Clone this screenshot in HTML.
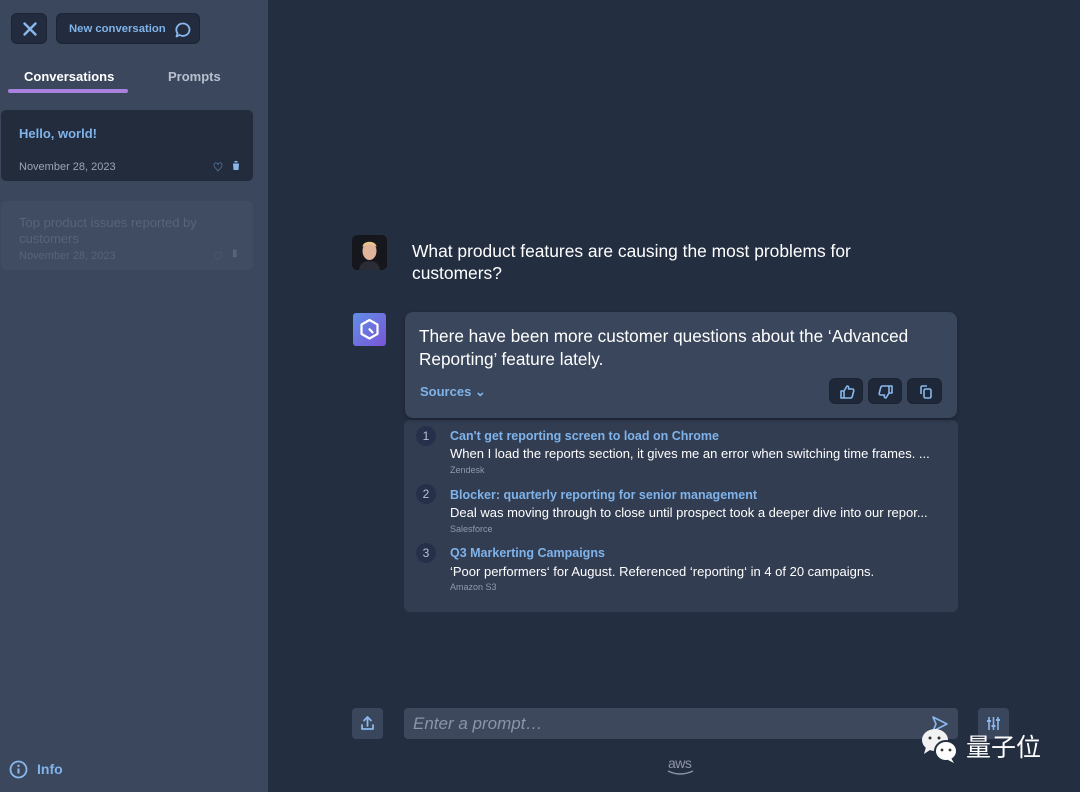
<!DOCTYPE html>
<html><head><meta charset="utf-8"><style>
*{box-sizing:border-box;margin:0;padding:0}
body{width:1080px;height:792px;overflow:hidden;background:#242e41;font-family:"Liberation Sans","Noto Sans CJK SC",sans-serif;position:relative}
.side{position:absolute;left:0;top:0;width:268px;height:792px;background:#3a475c}
.abs{position:absolute}
.btn{background:#232c3e;border-radius:6px;border:1px solid #1c2433}
.blue{color:#7fb3ea}
</style></head><body>
<div class="side">
  <div class="abs btn" style="left:11px;top:13px;width:36px;height:31px">
    <svg width="36" height="31" viewBox="0 0 36 31"><path d="M12.5 9.5l11 11M23.5 9.5l-11 11" stroke="#8ab8ec" stroke-width="2.4" stroke-linecap="round"/></svg>
  </div>
  <div class="abs btn" style="left:56px;top:13px;width:144px;height:31px">
    <span class="abs blue" style="left:12px;top:9px;font-size:11.3px;font-weight:bold">New conversation</span>
    <svg class="abs" style="left:116px;top:6px" width="20" height="20" viewBox="0 0 20 20"><path d="M10 3.5a6.5 6.2 0 1 1-3.4 11.5L3.5 16.5l1-3.3A6.5 6.2 0 0 1 10 3.5z" fill="none" stroke="#8ab8ec" stroke-width="1.8" stroke-linejoin="round"/></svg>
  </div>
  <div class="abs" style="left:24px;top:69px;color:#fff;font-size:13px;font-weight:bold">Conversations</div>
  <div class="abs" style="left:168px;top:69px;color:#b7c0cf;font-size:13px;font-weight:bold">Prompts</div>
  <div class="abs" style="left:8px;top:89px;width:120px;height:4px;border-radius:2px;background:#a982e0"></div>
  <div class="abs" style="left:1px;top:110px;width:252px;height:71px;background:#232c3d;border-radius:5px">
    <div class="abs blue" style="left:18px;top:16px;font-size:13px;font-weight:bold">Hello, world!</div>
    <div class="abs" style="left:18px;top:51px;font-size:11px;color:#9aa5b6">November 28, 2023</div>
    <div class="abs blue" style="left:212px;top:49px;font-size:10px">♡</div>
    <svg class="abs" style="left:231px;top:51px" width="8" height="9" viewBox="0 0 8 9"><path d="M0 1.5h8M2.5 1.5V0h3v1.5M1 2.5h6l-.5 6.5h-5z" fill="#8ab8ec"/></svg>
  </div>
  <div class="abs" style="left:1px;top:201px;width:252px;height:69px;background:#3f4c62;border-radius:5px">
    <div class="abs" style="left:18px;top:14px;font-size:13px;line-height:16px;color:#56657c">Top product issues reported by<br>customers</div>
    <div class="abs" style="left:18px;top:49px;font-size:11px;color:#56657c">November 28, 2023</div>
    <div class="abs" style="left:212px;top:47px;font-size:10px;color:#56657c">♡</div>
    <div class="abs" style="left:231px;top:47px;font-size:10px;color:#56657c">▮</div>
  </div>
  <svg class="abs" style="left:9px;top:760px" width="19" height="19" viewBox="0 0 19 19"><circle cx="9.5" cy="9.5" r="8" fill="none" stroke="#8ab8ec" stroke-width="1.8"/><path d="M9.5 8.5v5" stroke="#8ab8ec" stroke-width="2"/><circle cx="9.5" cy="5.8" r="1.2" fill="#8ab8ec"/></svg>
  <div class="abs blue" style="left:37px;top:761px;font-size:14px;font-weight:bold">Info</div>
</div>

<svg class="abs" style="left:352px;top:235px" width="35" height="35" viewBox="0 0 35 35"><rect width="35" height="35" rx="5" fill="#15171c"/><ellipse cx="17.5" cy="16" rx="7" ry="9" fill="#e0b49a"/><path d="M10.5 12c0-7 14-7 14 0-2-3-12-3-14 0z" fill="#e8c58c"/><path d="M7 35c1-7 6-9 10.5-9s9.5 2 10.5 9z" fill="#2a2d36"/></svg>
<div class="abs" style="left:412px;top:240px;color:#fff;font-size:17.4px;line-height:22px">What product features are causing the most problems for<br>customers?</div>

<svg class="abs" style="left:353px;top:313px" width="33" height="33" viewBox="0 0 33 33"><defs><linearGradient id="g" x1="0" y1="0" x2="1" y2="1"><stop offset="0" stop-color="#5f8fe6"/><stop offset="1" stop-color="#7a55d8"/></linearGradient></defs><rect width="33" height="33" rx="3" fill="url(#g)"/><path d="M16.5 7l8 4.6v9.3l-8 4.6-8-4.6v-9.3z" fill="none" stroke="#fff" stroke-width="2.2" stroke-linejoin="round"/><path d="M16.5 16.3l3 3" stroke="#fff" stroke-width="2.2" stroke-linecap="round"/></svg>

<div class="abs" style="left:404px;top:420px;width:554px;height:192px;background:#323d51;border-radius:6px"></div>
<div class="abs" style="left:405px;top:312px;width:552px;height:106px;background:#3a465b;border-radius:8px;box-shadow:0 2px 4px rgba(0,0,0,.25)">
  <div class="abs" style="left:14px;top:13px;color:#fff;font-size:17.2px;line-height:23px">There have been more customer questions about the ‘Advanced<br>Reporting’ feature lately.</div>
  <div class="abs blue" style="left:15px;top:72px;font-size:13px;font-weight:bold">Sources ⌄</div>
  <div class="abs btn" style="left:424px;top:66px;width:34px;height:26px;background:#1f2838"><svg width="34" height="26" viewBox="0 0 34 26"><path d="M11 12h3v7h-3zM14 12l3-5c1.5 0 2 1 1.5 3h4c1 0 1.5 1 1.2 2l-1.4 5.5c-.3 1-1 1.5-2 1.5H14" fill="none" stroke="#8ab8ec" stroke-width="1.6" stroke-linejoin="round"/></svg></div>
  <div class="abs btn" style="left:463px;top:66px;width:34px;height:26px;background:#1f2838"><svg width="34" height="26" viewBox="0 0 34 26"><g transform="rotate(180 17 13)"><path d="M11 12h3v7h-3zM14 12l3-5c1.5 0 2 1 1.5 3h4c1 0 1.5 1 1.2 2l-1.4 5.5c-.3 1-1 1.5-2 1.5H14" fill="none" stroke="#8ab8ec" stroke-width="1.6" stroke-linejoin="round"/></g></svg></div>
  <div class="abs btn" style="left:502px;top:66px;width:35px;height:26px;background:#1f2838"><svg width="35" height="26" viewBox="0 0 35 26"><rect x="16" y="10" width="7" height="9" rx="1.5" fill="none" stroke="#8ab8ec" stroke-width="1.6"/><path d="M13 15V8.5c0-1 .5-1.5 1.5-1.5H19" fill="none" stroke="#8ab8ec" stroke-width="1.6"/></svg></div>
</div>

<div class="abs" style="left:416px;top:426px;width:20px;height:20px;border-radius:10px;background:#27304a;color:#b7c2d3;font-size:12px;text-align:center;line-height:20px">1</div>
<div class="abs blue" style="left:450px;top:429px;font-size:12.5px;font-weight:bold">Can't get reporting screen to load on Chrome</div>
<div class="abs" style="left:450px;top:446px;font-size:13px;color:#fff">When I load the reports section, it gives me an error when switching time frames. ...</div>
<div class="abs" style="left:450px;top:465px;font-size:9px;color:#8f9aab">Zendesk</div>
<div class="abs" style="left:416px;top:484px;width:20px;height:20px;border-radius:10px;background:#27304a;color:#b7c2d3;font-size:12px;text-align:center;line-height:20px">2</div>
<div class="abs blue" style="left:450px;top:488px;font-size:12.5px;font-weight:bold">Blocker: quarterly reporting for senior management</div>
<div class="abs" style="left:450px;top:505px;font-size:13px;color:#fff">Deal was moving through to close until prospect took a deeper dive into our repor...</div>
<div class="abs" style="left:450px;top:524px;font-size:9px;color:#8f9aab">Salesforce</div>
<div class="abs" style="left:416px;top:543px;width:20px;height:20px;border-radius:10px;background:#27304a;color:#b7c2d3;font-size:12px;text-align:center;line-height:20px">3</div>
<div class="abs blue" style="left:450px;top:546px;font-size:12.5px;font-weight:bold">Q3 Markerting Campaigns</div>
<div class="abs" style="left:450px;top:564px;font-size:13px;color:#fff">‘Poor performers‘ for August. Referenced ‘reporting‘ in 4 of 20 campaigns.</div>
<div class="abs" style="left:450px;top:582px;font-size:9px;color:#8f9aab">Amazon S3</div>

<div class="abs" style="left:352px;top:708px;width:31px;height:31px;background:#3a465b;border-radius:4px"><svg width="31" height="31" viewBox="0 0 31 31"><path d="M15.5 18V9M12 12.5l3.5-3.5 3.5 3.5M10 17v4h11v-4" fill="none" stroke="#8ab8ec" stroke-width="1.8" stroke-linecap="round" stroke-linejoin="round"/></svg></div>
<div class="abs" style="left:404px;top:708px;width:554px;height:31px;background:#3d485d;border-radius:4px">
  <span class="abs" style="left:9px;top:6px;font-size:17px;font-style:italic;color:#8995a8">Enter a prompt…</span>
  <svg class="abs" style="left:526px;top:6px" width="20" height="20" viewBox="0 0 20 20"><path d="M3 3l14 7-14 7 3-7z" fill="none" stroke="#8ab8ec" stroke-width="1.6" stroke-linejoin="round"/></svg>
</div>
<div class="abs" style="left:978px;top:708px;width:31px;height:31px;background:#3a465b;border-radius:4px"><svg width="31" height="31" viewBox="0 0 31 31"><path d="M11 9v13M15.5 9v13M20 9v13" stroke="#8ab8ec" stroke-width="1.6"/><path d="M9 13h4M13.5 18h4M18 12h4" stroke="#8ab8ec" stroke-width="2"/></svg></div>

<div class="abs" style="left:668px;top:755px;font-size:14px;color:#8d96a6;letter-spacing:-0.5px">aws</div>
<svg class="abs" style="left:667px;top:770px" width="28" height="6" viewBox="0 0 28 6"><path d="M1 1q12 6 25 0" fill="none" stroke="#8d96a6" stroke-width="1.4"/></svg>

<svg class="abs" style="left:918px;top:725px" width="46" height="44" viewBox="0 0 46 44"><ellipse cx="17" cy="15" rx="13" ry="11" fill="#f2f2f2"/><path d="M8 22l-2 7 6-4z" fill="#f2f2f2"/><ellipse cx="28" cy="26" rx="11" ry="10" fill="#fff" stroke="#242e41" stroke-width="2"/><path d="M33 33l3 5-6-3z" fill="#fff"/><circle cx="12" cy="13" r="1.5" fill="#333"/><circle cx="21" cy="13" r="1.5" fill="#333"/><circle cx="24" cy="25" r="1.4" fill="#333"/><circle cx="32" cy="25" r="1.4" fill="#333"/></svg>
<div class="abs" style="left:966px;top:728px;font-size:25px;color:#fff">量子位</div>
</body></html>
